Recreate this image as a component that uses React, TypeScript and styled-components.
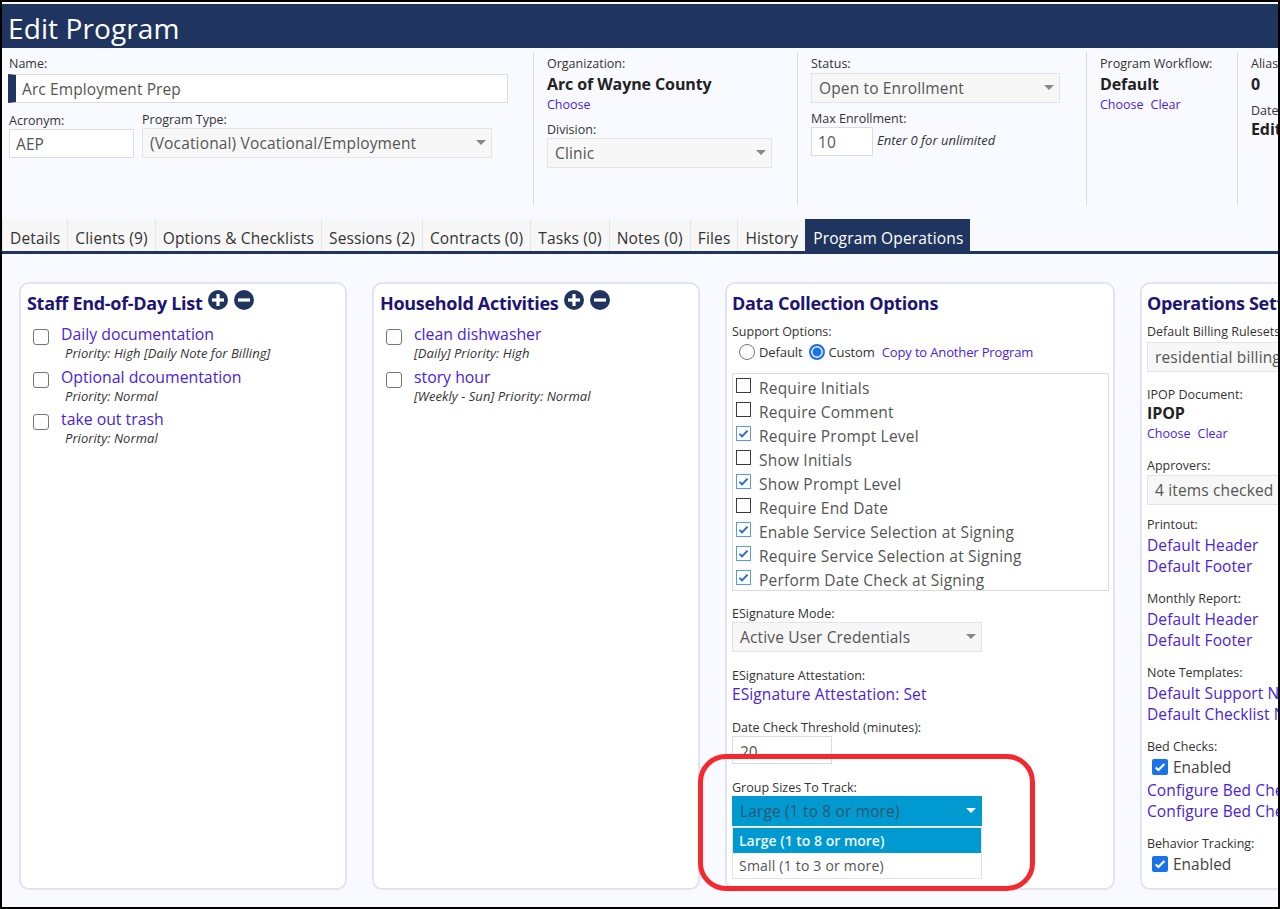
import React from 'react';
import styled, { createGlobalStyle } from 'styled-components';

const GlobalStyle = createGlobalStyle`
  html, body {
    margin: 0;
    padding: 0;
    background: #000;
  }
  * { box-sizing: border-box; }
`;

const Frame = styled.div`
  position: relative;
  width: 1280px;
  height: 909px;
  overflow: hidden;
  border: 2px solid #000;
  background: #f9faff;
  font-family: "Open Sans", "Noto Sans", sans-serif;
  color: #333;
`;

const TitleBar = styled.div`
  height: 44px;
  margin-top: 2px;
  background: #1f3560;
  color: #fff;
  font-size: 28px;
  line-height: 48px;
  padding-left: 6px;
  letter-spacing: 0.1px;
`;

const HeaderRow = styled.div`
  display: flex;
  width: 1400px;
  height: 172px;
  padding-top: 4px;
`;

const HeaderSection = styled.div<{ $width: number; $last?: boolean }>`
  width: ${p => p.$width}px;
  height: 153px;
  flex: none;
  padding: 4px 0 0 13px;
  border-right: ${p => (p.$last ? 'none' : '1px solid #d9dbe0')};
`;

const FirstSection = styled(HeaderSection)`
  padding-left: 7px;
`;

const Label = styled.div`
  font-size: 12.5px;
  line-height: 16px;
  color: #333;
  white-space: nowrap;
`;

const LinksLabel = styled(Label)`
  margin-bottom: 2px;
`;

const TextField = styled.div<{ $width: number; $accent?: boolean }>`
  width: ${p => p.$width}px;
  height: 29px;
  background: #fff;
  border: 1px solid #dcdcdc;
  border-left: ${p => (p.$accent ? '8px solid #1f3560' : '1px solid #dcdcdc')};
  font-size: 15.5px;
  line-height: 28px;
  padding-left: 6px;
  color: #555;
  letter-spacing: 0.1px;
  white-space: nowrap;
`;

const SelectBox = styled.div<{ $width: number; $open?: boolean }>`
  position: relative;
  width: ${p => p.$width}px;
  height: 30px;
  background: ${p => (p.$open ? '#0099d0' : '#f7f7f7')};
  border: 1px solid ${p => (p.$open ? '#0099d0' : '#e4e4e4')};
  font-size: 15.5px;
  line-height: 28px;
  padding-left: 7px;
  color: ${p => (p.$open ? '#2f5870' : '#555')};
  letter-spacing: 0.15px;
  white-space: nowrap;
  overflow: hidden;
`;

const Caret = styled.span<{ $open?: boolean }>`
  position: absolute;
  right: 5px;
  top: 11px;
  width: 0;
  height: 0;
  border-left: 5px solid transparent;
  border-right: 5px solid transparent;
  border-top: 5px solid ${p => (p.$open ? '#fff' : '#888')};
`;

const NameBlock = styled.div`
  margin: 2px 0 0 -1px;
`;

const FieldPair = styled.div`
  display: flex;
  gap: 8px;
  margin-top: 9px;
`;

const Strong = styled.div`
  font-size: 16px;
  line-height: 21px;
  font-weight: 700;
  color: #222;
  white-space: nowrap;
  letter-spacing: -0.1px;
`;

const HeaderStrong = styled(Strong)`
  margin-top: 2px;
`;

const LinkRow = styled.div`
  display: flex;
  gap: 7px;
  height: 19px;
`;

const SmallLink = styled.a`
  font-size: 12.5px;
  line-height: 19px;
  color: #4a22dc;
`;

const Spaced = styled.div<{ $top: number }>`
  margin-top: ${p => p.$top}px;
`;

const InlineRow = styled.div`
  display: flex;
  align-items: flex-start;
  gap: 4px;
`;

const Hint = styled.span`
  margin-top: 4px;
  font-size: 13px;
  font-style: italic;
  line-height: 18px;
  color: #333;
  white-space: nowrap;
`;

const TabBar = styled.div`
  display: flex;
  height: 35px;
  margin-top: -1px;
  border-bottom: 3px solid #1f3560;
`;

const Tab = styled.div<{ $active?: boolean }>`
  height: 32px;
  padding: 0 7px;
  background: ${p => (p.$active ? '#1f3560' : '#f7f7f7')};
  color: ${p => (p.$active ? '#fff' : '#333')};
  font-size: 15.5px;
  line-height: 38px;
  letter-spacing: 0.15px;
  white-space: nowrap;
  border-left: 1px solid ${p => (p.$active ? '#1f3560' : '#e6e6e6')};
`;

const CardRow = styled.div`
  display: flex;
  gap: 25px;
  padding: 28px 0 0 17px;
  width: 1500px;
`;

const Card = styled.div<{ $width: number; $inset?: number }>`
  width: ${p => p.$width}px;
  height: 608px;
  flex: none;
  background: #fff;
  border: 2px solid #e0e4ef;
  border-radius: 10px;
  padding: 6px 6px 0 ${p => p.$inset ?? 6}px;
  overflow: hidden;
`;

const CardTitle = styled.div<{ $tall?: boolean }>`
  display: flex;
  align-items: flex-start;
  height: ${p => (p.$tall ? 34 : 33)}px;
  font-size: 18px;
  line-height: 26px;
  font-weight: 700;
  color: #1d1573;
  white-space: nowrap;
  letter-spacing: -0.3px;
`;

const RoundIcon = styled.svg`
  width: 20px;
  height: 20px;
  margin: 0 0 0 6px;
`;

const TaskRow = styled.div`
  display: grid;
  grid-template-columns: 28px 1fr;
  height: 42.5px;
  padding-left: 6px;
`;

const EmptyBox = styled.span`
  display: block;
  width: 16px;
  height: 16px;
  margin-top: 6px;
  background: #fff;
  border: 1px solid #767676;
  border-radius: 3px;
`;

const TaskLink = styled.a`
  display: block;
  font-size: 15.8px;
  line-height: 22px;
  color: #4a22dc;
  white-space: nowrap;
`;

const TaskMeta = styled.div<{ $indent?: boolean }>`
  font-size: 13px;
  font-style: italic;
  line-height: 17px;
  color: #333;
  padding-left: ${p => (p.$indent ? 4 : 0)}px;
  letter-spacing: 0.05px;
  white-space: nowrap;
`;

const RadioRow = styled.div`
  display: flex;
  align-items: center;
  height: 22px;
  margin-top: 1px;
  padding-left: 7px;
  font-size: 13px;
  white-space: nowrap;
  color: #333;
`;

const Radio = styled.span<{ $on?: boolean }>`
  width: 16px;
  height: 16px;
  margin-right: 4px;
  border-radius: 50%;
  border: ${p => (p.$on ? '2px solid #1a73e8' : '1px solid #767676')};
  box-shadow: ${p => (p.$on ? 'inset 0 0 0 1.5px #fff' : 'none')};
  background-color: ${p => (p.$on ? '#1a73e8' : '#fff')};
`;

const RadioText = styled.span`
  margin-right: 6px;
  letter-spacing: -0.1px;
`;

const RadioLink = styled.a`
  color: #4a22dc;
  margin-left: 1px;
  letter-spacing: -0.15px;
`;

const OptionList = styled.div`
  width: 377px;
  height: 218px;
  margin-top: 10px;
  border: 1px solid #dcdcdc;
  padding-top: 2px;
  overflow: hidden;
`;

const OptionRow = styled.div`
  display: flex;
  height: 24px;
  padding-left: 3px;
  font-size: 15.5px;
  line-height: 25px;
  color: #555;
  letter-spacing: 0.2px;
  white-space: nowrap;
`;

const SquareBox = styled.span<{ $on?: boolean }>`
  flex: none;
  width: 15px;
  height: 15px;
  margin: 2px 8px 0 0;
  background: #fff;
  border: 1px solid ${p => (p.$on ? '#5a9be0' : '#44344a')};
  display: flex;
  align-items: center;
  justify-content: center;
`;

const FormGroup = styled.div<{ $top: number }>`
  margin-top: ${p => p.$top}px;
`;

const BigLink = styled.a`
  display: block;
  font-size: 15.5px;
  line-height: 21px;
  color: #4a22dc;
  letter-spacing: 0.1px;
  white-space: nowrap;
`;

const ThresholdBox = styled.div`
  width: 100px;
  height: 28px;
  background: #fff;
  border: 1px solid #dcdcdc;
  padding: 5px 0 0 7px;
  overflow: hidden;
`;

const ClippedValue = styled.div`
  height: 12px;
  overflow: hidden;
  font-size: 15.5px;
  line-height: 20px;
  color: #555;
`;

const DropMenu = styled.div`
  width: 250px;
  height: 52px;
  margin-top: 1px;
  background: #fff;
  border: 1px solid #e4e4e4;
`;

const DropItem = styled.div<{ $active?: boolean }>`
  height: 25px;
  padding-left: 6px;
  font-size: 14px;
  line-height: 25px;
  background: ${p => (p.$active ? '#0099d0' : 'transparent')};
  color: ${p => (p.$active ? '#eef8fc' : '#555')};
  font-weight: ${p => (p.$active ? 600 : 400)};
  letter-spacing: ${p => (p.$active ? 0 : 0.2)}px;
`;

const EnabledRow = styled.div`
  display: flex;
  align-items: center;
  height: 22px;
  margin: 1px 0 2px;
  padding-left: 5px;
  font-size: 15.5px;
  color: #444;
  white-space: nowrap;
`;

const BlueBox = styled.span`
  width: 16px;
  height: 16px;
  margin-right: 5px;
  border-radius: 2px;
  background: #1a73e8;
  display: flex;
  align-items: center;
  justify-content: center;
`;

const Highlight = styled.div`
  position: absolute;
  left: 696px;
  top: 752px;
  width: 337px;
  height: 137px;
  border: 5px solid #f5282f;
  border-radius: 28px;
  pointer-events: none;
`;

const Tick: React.FC<{ color: string; size: number }> = ({ color, size }) => (
  <svg width={size} height={size} viewBox="0 0 16 16">
    <path d="M3 8.5l3.2 3L13 4.5" fill="none" stroke={color} strokeWidth="2.4" />
  </svg>
);

const PlusCircle: React.FC = () => (
  <RoundIcon viewBox="0 0 20 20">
    <circle cx="10" cy="10" r="10" fill="#1f3560" />
    <rect x="4" y="8.4" width="12" height="3.2" fill="#fff" />
    <rect x="8.4" y="4" width="3.2" height="12" fill="#fff" />
  </RoundIcon>
);

const MinusCircle: React.FC = () => (
  <RoundIcon viewBox="0 0 20 20">
    <circle cx="10" cy="10" r="10" fill="#1f3560" />
    <rect x="4" y="8.4" width="12" height="3.2" fill="#fff" />
  </RoundIcon>
);

const tabs = [
  'Details',
  'Clients (9)',
  'Options & Checklists',
  'Sessions (2)',
  'Contracts (0)',
  'Tasks (0)',
  'Notes (0)',
  'Files',
  'History',
];

const options: [string, boolean][] = [
  ['Require Initials', false],
  ['Require Comment', false],
  ['Require Prompt Level', true],
  ['Show Initials', false],
  ['Show Prompt Level', true],
  ['Require End Date', false],
  ['Enable Service Selection at Signing', true],
  ['Require Service Selection at Signing', true],
  ['Perform Date Check at Signing', true],
];

const staffTasks = [
  ['Daily documentation', 'Priority: High [Daily Note for Billing]'],
  ['Optional dcoumentation', 'Priority: Normal'],
  ['take out trash', 'Priority: Normal'],
];

const householdTasks = [
  ['clean dishwasher', '[Daily] Priority: High'],
  ['story hour', '[Weekly - Sun] Priority: Normal'],
];

const App: React.FC = () => (
  <Frame>
    <GlobalStyle />
    <TitleBar>Edit Program</TitleBar>

    <HeaderRow>
      <FirstSection $width={532}>
        <Label>Name:</Label>
        <NameBlock>
          <TextField $width={500} $accent>Arc Employment Prep</TextField>
        </NameBlock>
        <FieldPair>
          <div>
            <Spaced $top={1}><Label>Acronym:</Label></Spaced>
            <TextField $width={125}>AEP</TextField>
          </div>
          <div>
            <Label>Program Type:</Label>
            <SelectBox $width={350}>
              (Vocational) Vocational/Employment
              <Caret />
            </SelectBox>
          </div>
        </FieldPair>
      </FirstSection>

      <HeaderSection $width={264}>
        <Label>Organization:</Label>
        <HeaderStrong>Arc of Wayne County</HeaderStrong>
        <LinkRow><SmallLink>Choose</SmallLink></LinkRow>
        <Spaced $top={8}><Label>Division:</Label></Spaced>
        <SelectBox $width={225}>
          Clinic
          <Caret />
        </SelectBox>
      </HeaderSection>

      <HeaderSection $width={289}>
        <Label>Status:</Label>
        <Spaced $top={1}>
          <SelectBox $width={249}>
            Open to Enrollment
            <Caret />
          </SelectBox>
        </Spaced>
        <Spaced $top={8}><Label>Max Enrollment:</Label></Spaced>
        <InlineRow>
          <TextField $width={62}>10</TextField>
          <Hint>Enter 0 for unlimited</Hint>
        </InlineRow>
      </HeaderSection>

      <HeaderSection $width={151}>
        <Label>Program Workflow:</Label>
        <HeaderStrong>Default</HeaderStrong>
        <LinkRow>
          <SmallLink>Choose</SmallLink>
          <SmallLink>Clear</SmallLink>
        </LinkRow>
      </HeaderSection>

      <HeaderSection $width={100} $last>
        <Label>Alias</Label>
        <HeaderStrong>0</HeaderStrong>
        <Spaced $top={8}><Label>Date</Label></Spaced>
        <Strong>Edit</Strong>
      </HeaderSection>
    </HeaderRow>

    <TabBar>
      {tabs.map(t => <Tab key={t}>{t}</Tab>)}
      <Tab $active>Program Operations</Tab>
    </TabBar>

    <CardRow>
      <Card $width={328}>
        <CardTitle>
          Staff End-of-Day List
          <PlusCircle />
          <MinusCircle />
        </CardTitle>
        {staffTasks.map(([name, meta]) => (
          <TaskRow key={name}>
            <EmptyBox />
            <div>
              <TaskLink>{name}</TaskLink>
              <TaskMeta $indent>{meta}</TaskMeta>
            </div>
          </TaskRow>
        ))}
      </Card>

      <Card $width={328}>
        <CardTitle>
          Household Activities
          <PlusCircle />
          <MinusCircle />
        </CardTitle>
        {householdTasks.map(([name, meta]) => (
          <TaskRow key={name}>
            <EmptyBox />
            <div>
              <TaskLink>{name}</TaskLink>
              <TaskMeta>{meta}</TaskMeta>
            </div>
          </TaskRow>
        ))}
      </Card>

      <Card $width={390} $inset={5}>
        <CardTitle $tall>Data Collection Options</CardTitle>
        <Label>Support Options:</Label>
        <RadioRow>
          <Radio />
          <RadioText>Default</RadioText>
          <Radio $on />
          <RadioText>Custom</RadioText>
          <RadioLink>Copy to Another Program</RadioLink>
        </RadioRow>
        <OptionList>
          {options.map(([text, on]) => (
            <OptionRow key={text}>
              <SquareBox $on={on}>{on && <Tick color="#2468d8" size={13} />}</SquareBox>
              {text}
            </OptionRow>
          ))}
        </OptionList>

        <FormGroup $top={15}>
          <Label>ESignature Mode:</Label>
          <SelectBox $width={250}>
            Active User Credentials
            <Caret />
          </SelectBox>
        </FormGroup>
        <FormGroup $top={16}>
          <Label>ESignature Attestation:</Label>
          <BigLink>ESignature Attestation: Set</BigLink>
        </FormGroup>
        <FormGroup $top={15}>
          <Label>Date Check Threshold (minutes):</Label>
          <ThresholdBox><ClippedValue>20</ClippedValue></ThresholdBox>
        </FormGroup>
        <FormGroup $top={16}>
          <Label>Group Sizes To Track:</Label>
          <SelectBox $width={250} $open>
            Large (1 to 8 or more)
            <Caret $open />
          </SelectBox>
          <DropMenu>
            <DropItem $active>Large (1 to 8 or more)</DropItem>
            <DropItem>Small (1 to 3 or more)</DropItem>
          </DropMenu>
        </FormGroup>
      </Card>

      <Card $width={300} $inset={5}>
        <CardTitle $tall>Operations Settings</CardTitle>
        <Label>Default Billing Rulesets:</Label>
        <Spaced $top={2}>
          <SelectBox $width={260}>residential billing</SelectBox>
        </Spaced>
        <FormGroup $top={15}>
          <Label>IPOP Document:</Label>
          <Strong>IPOP</Strong>
          <LinkRow>
            <SmallLink>Choose</SmallLink>
            <SmallLink>Clear</SmallLink>
          </LinkRow>
        </FormGroup>
        <FormGroup $top={15}>
          <Label>Approvers:</Label>
          <Spaced $top={1}>
            <SelectBox $width={260}>4 items checked</SelectBox>
          </Spaced>
        </FormGroup>
        <FormGroup $top={12}>
          <LinksLabel>Printout:</LinksLabel>
          <BigLink>Default Header</BigLink>
          <BigLink>Default Footer</BigLink>
        </FormGroup>
        <FormGroup $top={14}>
          <LinksLabel>Monthly Report:</LinksLabel>
          <BigLink>Default Header</BigLink>
          <BigLink>Default Footer</BigLink>
        </FormGroup>
        <FormGroup $top={14}>
          <LinksLabel>Note Templates:</LinksLabel>
          <BigLink>Default Support Note</BigLink>
          <BigLink>Default Checklist Note</BigLink>
        </FormGroup>
        <FormGroup $top={14}>
          <Label>Bed Checks:</Label>
          <EnabledRow>
            <BlueBox><Tick color="#fff" size={14} /></BlueBox>
            Enabled
          </EnabledRow>
          <BigLink>Configure Bed Checks</BigLink>
          <BigLink>Configure Bed Checks</BigLink>
        </FormGroup>
        <FormGroup $top={14}>
          <Label>Behavior Tracking:</Label>
          <EnabledRow>
            <BlueBox><Tick color="#fff" size={14} /></BlueBox>
            Enabled
          </EnabledRow>
        </FormGroup>
      </Card>
    </CardRow>

    <Highlight />
  </Frame>
);

export default App;
